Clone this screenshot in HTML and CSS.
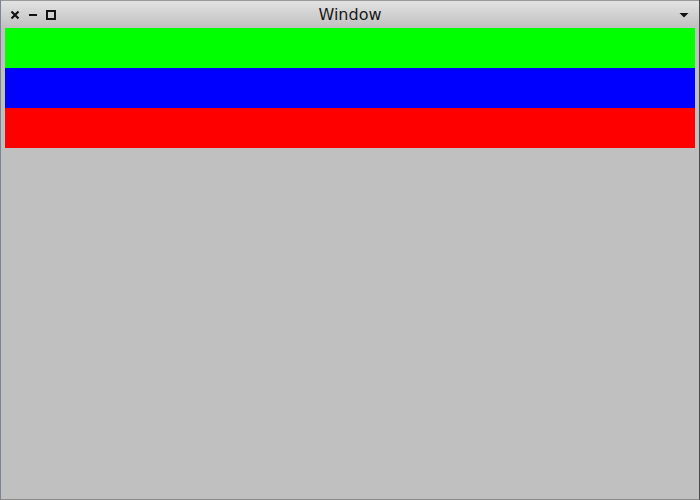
FILE: index.html
```html
<!DOCTYPE html>
<html>
<head>
<meta charset="utf-8">
<link rel="stylesheet" href="styles.css">
</head>
<body>
<div class="window">
  <div class="titlebar">
    <div class="controls">
      <svg class="icon" width="10" height="10" viewBox="0 0 10 10"><path d="M1.5 1.5 L8.5 8.5 M8.5 1.5 L1.5 8.5" stroke="#111" stroke-width="2.2"/></svg>
      <svg class="icon" width="10" height="10" viewBox="0 0 10 10"><path d="M1 5 H9" stroke="#111" stroke-width="2"/></svg>
      <svg class="icon" width="10" height="10" viewBox="0 0 10 10"><rect x="1" y="1" width="8" height="8" fill="none" stroke="#111" stroke-width="2"/></svg>
    </div>
    <div class="title">Window</div>
    <svg class="menu" width="10" height="10" viewBox="0 0 10 10"><path d="M0.5 3 H9.5 L5 7.5 Z" fill="#111"/></svg>
  </div>
  <div class="content">
    <div class="bar green"></div>
    <div class="bar blue"></div>
    <div class="bar red"></div>
  </div>
</div>
</body>
</html>
```
FILE: styles.css
```css
html, body {
  margin: 0;
  padding: 0;
  background: #c0c0c0;
}
.window {
  width: 700px;
  height: 500px;
  box-sizing: border-box;
  border-left: 1px solid #7c8494;
  border-right: 1px solid #4a4a4a;
  border-bottom: 1px solid #8a8a8a;
  background: #c0c0c0;
  display: flex;
  flex-direction: column;
}
.titlebar {
  height: 28px;
  flex: none;
  box-sizing: border-box;
  border-top: 1px solid #9a9a9a;
  background: linear-gradient(#e2e2e2, #c0c0c0);
  display: flex;
  align-items: center;
  position: relative;
  font-family: "DejaVu Sans", sans-serif;
}
.controls {
  display: flex;
  gap: 8px;
  padding-left: 9px;
  align-items: center;
}
.icon {
  display: block;
}
.title {
  position: absolute;
  left: 0;
  right: 0;
  text-align: center;
  font-size: 16px;
  color: #1a1a1a;
  pointer-events: none;
}
.menu {
  margin-left: auto;
  margin-right: 10px;
  display: block;
}
.content {
  padding: 0 4px;
  display: flex;
  flex-direction: column;
}
.bar {
  height: 40px;
}
.green { background: #00ff00; }
.blue { background: #0000ff; }
.red { background: #ff0000; }
```
